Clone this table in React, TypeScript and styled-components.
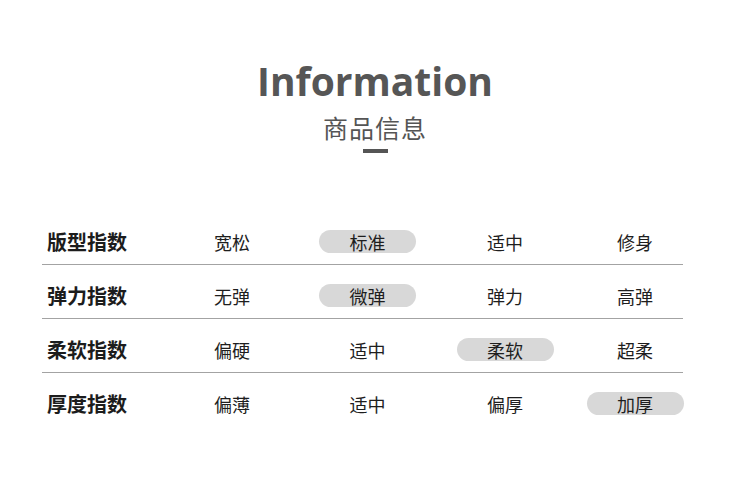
import styled, { createGlobalStyle } from 'styled-components';

const GlobalStyle = createGlobalStyle`
  body {
    margin: 0;
    background: #ffffff;
    font-family: "Noto Sans CJK SC", "Noto Sans", sans-serif;
  }
`;

const COLUMNS = '122px 136px 135px 140px 120px';

type Row = {
  label: string;
  options: string[];
  active: number;
};

const rows: Row[] = [
  { label: '版型指数', options: ['宽松', '标准', '适中', '修身'], active: 1 },
  { label: '弹力指数', options: ['无弹', '微弹', '弹力', '高弹'], active: 1 },
  { label: '柔软指数', options: ['偏硬', '适中', '柔软', '超柔'], active: 2 },
  { label: '厚度指数', options: ['偏薄', '适中', '偏厚', '加厚'], active: 3 },
];

const Page = styled.div`
  width: 750px;
  height: 483px;
  display: flex;
  flex-direction: column;
  align-items: center;
  overflow: hidden;
`;

const Header = styled.header`
  display: flex;
  flex-direction: column;
  align-items: center;
  padding-top: 57px;
`;

const Title = styled.h1`
  margin: 0;
  font-family: "Open Sans", "Noto Sans", sans-serif;
  font-weight: 700;
  font-size: 39px;
  line-height: 48px;
  color: #565656;
`;

const Subtitle = styled.h2`
  margin: 6px 0 0;
  font-weight: 400;
  font-size: 25px;
  line-height: 32px;
  letter-spacing: 1px;
  color: #555555;
`;

const Bar = styled.div`
  width: 25px;
  height: 4px;
  margin-top: 6px;
  background: #555555;
`;

const Table = styled.div`
  align-self: flex-start;
  width: 641px;
  margin: 58px 0 0 42px;
  display: flex;
  flex-direction: column;
`;

const TableRow = styled.div<{ $last?: boolean }>`
  display: grid;
  grid-template-columns: ${COLUMNS};
  align-items: center;
  height: 54px;
  padding-top: 8px;
  box-sizing: border-box;
  border-bottom: 1px solid ${p => (p.$last ? 'transparent' : '#a3a3a3')};
`;

const Label = styled.div`
  padding-left: 5px;
  font-weight: 700;
  font-size: 20px;
  color: #1c1c1c;
`;

const Option = styled.div<{ $active?: boolean }>`
  justify-self: center;
  width: 97px;
  height: 23px;
  display: flex;
  align-items: center;
  justify-content: center;
  border-radius: 12px;
  background: ${p => (p.$active ? '#d8d8d8' : 'transparent')};
  font-size: 18px;
  color: #1e1e1e;
`;

export default function App() {
  return (
    <Page>
      <GlobalStyle />
      <Header>
        <Title>Information</Title>
        <Subtitle>商品信息</Subtitle>
        <Bar />
      </Header>
      <Table>
        {rows.map((row, i) => (
          <TableRow key={row.label} $last={i === rows.length - 1}>
            <Label>{row.label}</Label>
            {row.options.map((opt, j) => (
              <Option key={opt + j} $active={j === row.active}>
                {opt}
              </Option>
            ))}
          </TableRow>
        ))}
      </Table>
    </Page>
  );
}
